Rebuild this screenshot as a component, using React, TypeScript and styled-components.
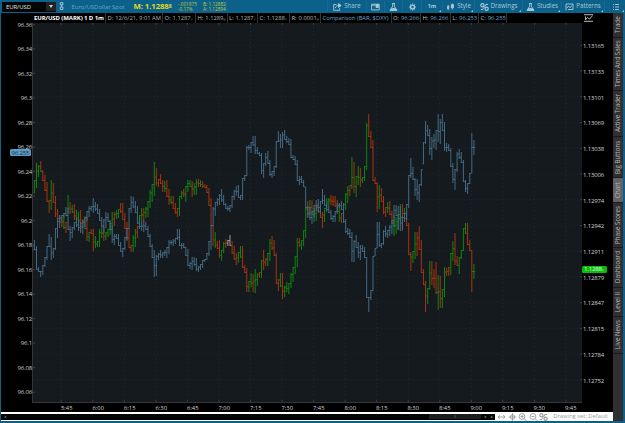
import styled, { createGlobalStyle } from "styled-components";

// One token per minute: high-low followed by the bar colour (g up, r down, w flat).
const EURUSD = `180-193g 163-188g 165-177g 161-172r 170-181r 175-191r 182-202r 200-213r 180-210g 183-203r
196-217r 209-219r 215-223r 217-227r 215-229g 222-233r 195-213g 202-214r 205-213g 204-220r
210-222g 212-226g 210-232r 219-228r 216-229g 217-241r 232-242g 229-234r 229-251r 236-248g
241-247g 229-247g 227-238g 226-241r 232-240g 229-237g 223-235g 212-233g 212-226r 210-219g
209-218g 203-213r 203-220r 213-229r 222-240r 228-248r 245-252r 235-252g 229-247g 226-238r
215-229g 208-222g 208-222r 207-218g 201-217g 190-208g 184-202g 162-196g 168-186r 179-187r
174-184r 180-192r 181-192g 180-197r 189-205r 196-204g 196-209r 203-214r 208-217r 196-216g
191-199g 189-197r 186-202g 180-192g 180-187g 181-197r 183-195g 179-195g 179-187r 180-187g
181-188r 184-188r 185-193r 188-206r 198-226r 226-246r 232-248g 241-249r 240-258r 250-261g
242-253g 239-248r 240-246w 235-246w 241-254r 246-260r 253-265r 252-263g 246-258g 246-268r
265-273r 268-292r 281-292g 273-287g 274-292r 269-293g 273-286g 272-278r 260-278g 250-270r
258-266r 253-266g 239-261g 236-250r 240-256r 253-284r 279-291r 273-287g 273-299r 286-297g
282-292g 283-294g 273-288g 267-282g 256-274g 238-267g 238-247r 240-250g 230-246g 207-238g
201-217r 200-215g 200-215r 208-222g 206-221g 203-212r 206-218r 212-228r 208-222g 198-208g
198-206g 195-205r 196-206r 196-207r 200-212r 203-222g 213-223r 204-223g 193-210g 186-203g
185-196r 157-189g 162-193r 176-197g 166-185g 168-187r 177-183g 166-181g 123-170g 114-137r
131-148r 140-181r 177-184r 182-212r 185-209g 188-202r 196-214r 207-217r 202-213g 201-215r
211-224r 215-236g 217-234g 214-230g 204-222g 204-231r 208-219g 212-226r 223-255r 252-271r
251-263g 232-259g 232-256r 226-250r 240-273r 269-285r 281-312r 288-304g 261-290g 261-285r
269-288r 262-294r 275-310g 276-308r 289-308g 267-297g 268-276r 267-276r 253-275g 241-261g
233-265r 256-266r 257-274g 250-259g 228-251g 223-234g 223-245r 240-251r 250-292r 264-279g`;

const DXY = `240-250 246-270 267-272 271-277 265-275 257-267 246-260 234-247 237-260 248-258
228-250 218-238 215-228 215-221 213-218 207-216 208-230 226-241 227-238 222-230
217-227 219-231 222-233 220-234 217-227 211-221 206-217 206-211 198-213 202-211
204-214 209-221 217-227 219-233 212-228 213-222 220-230 225-243 234-245 234-239
234-246 242-252 248-257 237-250 228-241 208-229 196-213 197-208 201-213 206-224
217-229 222-231 220-232 222-230 226-237 234-247 244-258 250-277 255-276 253-260
250-258 252-258 250-256 247-258 240-254 240-245 239-246 238-244 229-240 229-246
243-249 243-248 247-256 249-266 262-269 257-270 257-266 258-271 266-272 264-270
260-268 259-262 253-260 241-256 225-250 207-226 202-216 198-206 194-205 189-202
195-205 203-209 206-211 205-212 196-208 190-200 186-196 185-198 195-200 178-200
175-181 146-176 145-150 142-153 136-146 136-154 147-154 152-156 153-174 163-178
153-166 151-164 160-176 171-178 166-176 141-168 131-142 134-148 132-148 130-140
136-143 138-145 139-158 155-160 156-165 160-181 176-185 176-183 180-187 187-208
206-218 207-220 211-224 205-218 200-211 199-213 201-214 189-204 195-206 203-212
206-213 210-220 215-222 211-222 203-214 203-208 201-210 203-222 219-233 228-235
229-238 232-262 240-262 235-248 242-258 245-260 245-252 247-258 257-298 297-312
290-300 256-291 248-256 222-248 222-247 243-248 230-245 226-237 230-238 225-236
220-234 205-227 205-216 206-230 206-231 216-230 213-222 204-220 175-208 158-178
167-180 178-196 179-200 184-202 169-186 142-164 121-144 125-136 129-155 137-160
134-148 130-150 114-142 119-144 114-131 122-151 143-152 144-151 148-167 163-183
169-190 152-172 149-159 152-163 160-182 180-192 183-194 173-184 133-173 140-155`;

const COLORS: Record<string, string> = {
  g: "#0f860f",
  r: "#a8330f",
  w: "#9a9a9a",
  b: "#446a85",
};

const FIRST_BAR = 34.4;
const BAR_STEP = 2.103;

const parseBars = (data: string) =>
  data.split(/\s+/).map((token) => {
    const [, high, low, color] = token.match(/(\d+)-(\d+)(\w?)/)!;
    return { high: +high, low: +low, color: color || "b" };
  });

const clamp = (v: number, a: number, b: number) => Math.max(a, Math.min(b, v));

const Series = ({ data }: { data: string }) => {
  const bars = parseBars(data);
  const closes = bars.map((bar, i) => {
    const next = bars[i + 1] || bar;
    return clamp((next.high + next.low) / 2, bar.high + 0.5, bar.low - 0.5);
  });
  return (
    <>
      {bars.map((bar, i) => {
        const x = FIRST_BAR + i * BAR_STEP;
        const open = clamp(closes[i - 1] ?? bar.low, bar.high, bar.low);
        return (
          <path
            key={i}
            d={`M${x} ${bar.high}V${bar.low}M${x - 1} ${open}H${x}M${x} ${closes[i]}H${x + 1.2}`}
            stroke={COLORS[bar.color]}
          />
        );
      })}
    </>
  );
};

const times = ["5:45", "6:00", "6:15", "6:30", "6:45", "7:00", "7:15", "7:30", "7:45", "8:00", "8:15", "8:30", "8:45", "9:00", "9:15", "9:30", "9:45"];
const dollarIndex = ["96.36", "96.34", "96.32", "96.3", "96.28", "96.26", "96.24", "96.22", "96.2", "96.18", "96.16", "96.14", "96.12", "96.1", "96.08", "96.06"];
const prices = ["1.13165", "1.13133", "1.13101", "1.13069", "1.13038", "1.13006", "1.12974", "1.12942", "1.12911", "1.12879", "1.12847", "1.12815", "1.12784", "1.12752"];

const PriceChart = () => (
  <ChartSvg viewBox="33 23 549 379" fill="none">
    <g stroke="#262d32" strokeWidth="0.8" strokeDasharray="1 3">
      {times.map((t, i) => (
        <path key={t} d={`M${61.2 + i * 31.55} 23V402`} />
      ))}
      {prices.map((p, i) => (
        <path key={p} d={`M33 ${45.3 + i * 25.73}H582`} />
      ))}
    </g>
    <g stroke="#4d5256" strokeWidth="0.7">
      {times.map((t, i) => (
        <path key={t} d={`M${61.2 + i * 31.55} 23v2M${61.2 + i * 31.55} 400v2`} />
      ))}
      {dollarIndex.map((p, i) => (
        <path key={p} d={`M33 ${24.4 + i * 24.52}h2`} />
      ))}
      {prices.map((p, i) => (
        <path key={p} d={`M580 ${45.3 + i * 25.73}h2`} />
      ))}
    </g>
    <g strokeWidth="1">
      <Series data={EURUSD} />
      <Series data={DXY} />
    </g>
  </ChartSvg>
);

const ShareIcon = () => (
  <Icon viewBox="0 0 9 8">
    <path d="M3.5 1.5H.7v5.8h6V5.2M2.4 5c.3-1.9 1.7-2.5 4-2.5" />
    <path d="M5.5.6 8.2 2.5 5.5 4.4z" fill="currentColor" />
  </Icon>
);

const NoteIcon = () => (
  <Icon viewBox="0 0 9 8">
    <path d="M.6 1.2h7.6v5.7H.6zM.6 2.2h4" />
    <path d="M5 1.5h2.4v3H5z" fill="currentColor" />
  </Icon>
);

const FlaskIcon = () => (
  <Icon viewBox="0 0 9 8">
    <path d="M3 .5h3M3.7.5v2.7L1 7.4h7L5.3 3.2V.5" />
    <path d="M2.6 5.4h3.8l1.3 1.9H1.4z" fill="currentColor" />
  </Icon>
);

const GearIcon = () => (
  <Icon viewBox="0 0 9 8">
    <circle cx="4.5" cy="4" r="1.9" strokeWidth="1.4" />
    <path d="M4.5.6v1M4.5 6.4v1M1.1 4h1M6.9 4h1M2.1 1.6l.8.8M6.1 5.6l.8.8M6.9 1.6l-.8.8M2.9 5.6l-.8.8" strokeWidth="1.2" />
  </Icon>
);

const StyleIcon = () => (
  <Icon viewBox="0 0 9 8">
    <path d="M2.2 1.8v5.4M6.4.4v6" />
    <path d="M1.6 3.3h1.2v2.4H1.6zM5.3 1.7h2.2v3H5.3z" fill="currentColor" />
  </Icon>
);

const DrawingsIcon = () => (
  <Icon viewBox="0 0 9 8">
    <circle cx="2.4" cy="2.3" r="1.6" strokeWidth="1.2" />
    <circle cx="6.6" cy="5.7" r="1.6" strokeWidth="1.2" />
    <path d="M6.8.8 2 7.2M5.5 1.5h2.6M.8 6.5h2" />
  </Icon>
);

const PatternsIcon = () => (
  <Icon viewBox="0 0 9 8">
    <path d="M1 7.5V1h7v5.5H3M2 5l1.5-2L5 4.8 7 2.4" />
  </Icon>
);

const ListIcon = () => (
  <Icon viewBox="0 0 9 8">
    <path d="M2 1.5h1M4 1.5h4M2 4h1M4 4h4M2 6.5h1M4 6.5h4" />
  </Icon>
);

const quoteCells: [string, string, number, boolean?][] = [
  ["D:", "12/6/21, 9:01 AM", 57],
  ["O:", "1.1287₇", 33],
  ["H:", "1.1289₀", 31.5],
  ["L:", "1.1287₇", 30.5],
  ["C:", "1.1288₇", 32],
  ["R:", "0.0001₀", 31],
  ["", "Comparison (BAR, $DXY)", 70.5, true],
  ["O:", "96.266", 29.5, true],
  ["H:", "96.266", 30, true],
  ["L:", "96.253", 28, true],
  ["C:", "96.255", 29, true],
];

const sideTabs: [string, number][] = [
  ["Trade", 25],
  ["Times And Sales", 53],
  ["Active Trader", 46],
  ["Big Buttons", 41],
  ["Chart", 25],
  ["Phase Scores", 45],
  ["Dashboard", 40],
  ["Level II", 29],
  ["Live News", 37],
];

const App = () => {
  return (
    <Screen>
      <GlobalStyle />
      <TopBar>
        <SymbolBox>
          <span>EUR/USD</span>
          <SymbolArrow />
        </SymbolBox>
        <LinkBox>
          <svg width="6" height="9" viewBox="0 0 6 9" fill="none" stroke="#9cc4d8">
            <path d="M1.3.7h2.6v2.2H1.3zM1.3 5h2.6v2.5H1.3zM2.6 2.9V5" />
          </svg>
        </LinkBox>
        <SpotName>Euro/USDollar Spot</SpotName>
        <LastPrice>
          M: 1.1288<small>8</small>
        </LastPrice>
        <PricePair $width={26}>
          <span>-.001975</span>
          <span>-0.17%</span>
        </PricePair>
        <PricePair $width={25}>
          <span>B: 1.12882</span>
          <span>A: 1.12894</span>
        </PricePair>
        <Spacer />
        <ToolItem $width={39}><ShareIcon />Share</ToolItem>
        <ToolItem $width={18}><NoteIcon /></ToolItem>
        <ToolItem $width={18}><FlaskIcon /></ToolItem>
        <ToolItem $width={19}><GearIcon /></ToolItem>
        <ToolItem $width={21} $menu><b>1m</b></ToolItem>
        <ToolItem $width={32} $menu><StyleIcon />Style</ToolItem>
        <ToolItem $width={48} $menu><DrawingsIcon />Drawings</ToolItem>
        <ToolItem $width={39} $menu><FlaskIcon />Studies</ToolItem>
        <ToolItem $width={43} $menu><PatternsIcon />Patterns</ToolItem>
        <ToolItem $width={21} $menu><ListIcon /></ToolItem>
      </TopBar>
      <Main>
        <Workspace>
          <QuoteBar>
            <QuoteTitle>EUR/USD (MARK) 1 D 1m</QuoteTitle>
            {quoteCells.map(([label, value, width, blue], i) => (
              <QuoteCell key={i} $width={width}>
                {label && <span>{label}</span>}
                <QuoteValue $blue={blue}>{value}</QuoteValue>
              </QuoteCell>
            ))}
            <CornerIcon viewBox="0 0 10 8" fill="none" stroke="#b8b8b8">
              <path d="M0 .7h9M0 7.3h9M1.5 2.5v3.4l2-2.4 2 1.6L8.5 1.6" />
            </CornerIcon>
          </QuoteBar>
          <ChartRow>
            <LeftAxis>
              {dollarIndex.map((v) => <LeftLabel key={v}>{v}</LeftLabel>)}
              <LeftBadge>96.255</LeftBadge>
            </LeftAxis>
            <PriceChart />
            <RightAxis>
              {prices.map((v) => <RightLabel key={v}>{v}</RightLabel>)}
              <RightBadge>1.1288<small>₇</small></RightBadge>
            </RightAxis>
          </ChartRow>
          <TimeAxis>
            {times.map((t) => <TimeLabel key={t}>{t}</TimeLabel>)}
          </TimeAxis>
          <BottomBar>
            <ScrollTrack>
              <ScrollArrow>◂</ScrollArrow>
              <ScrollThumb>≡</ScrollThumb>
              <ScrollArrow>◂</ScrollArrow>
              <ScrollArrow>▸</ScrollArrow>
            </ScrollTrack>
            <BottomTools>
              <Icon viewBox="0 0 9 8">
                <path d="M1 4h7M2.7 2.2 1 4l1.7 1.8M6.3 2.2 8 4 6.3 5.8" />
              </Icon>
              <Icon viewBox="0 0 9 8">
                <circle cx="4.5" cy="4" r="2.3" />
                <path d="M4.5.3v7.4M.8 4h7.4" />
              </Icon>
              <Icon viewBox="0 0 9 8">
                <circle cx="4" cy="3.5" r="2.9" />
                <path d="M6.1 5.6 8.5 8M2.5 3.5h3M4 2v3" />
              </Icon>
              <Icon viewBox="0 0 9 8">
                <circle cx="4" cy="3.5" r="2.9" />
                <path d="M6.1 5.6 8.5 8M2.5 3.5h3" />
              </Icon>
              <DrawingsIcon />
            </BottomTools>
            <DrawingSet>Drawing set: Default</DrawingSet>
          </BottomBar>
        </Workspace>
        <SideTabs>
          {sideTabs.map(([name, height]) => (
            <SideTab key={name} $height={height} $active={name === "Chart"}>{name}</SideTab>
          ))}
        </SideTabs>
      </Main>
    </Screen>
  );
};

const GlobalStyle = createGlobalStyle`
  body {
    margin: 0;
    overflow: hidden;
    background: #000;
  }
  * {
    box-sizing: border-box;
  }
`;

const Screen = styled.div`
  width: 625px;
  height: 423px;
  display: flex;
  flex-direction: column;
  background: #0b618a;
  font-family: "Open Sans", "Noto Sans", sans-serif;
  font-size: 6px;
  line-height: 1;
  white-space: nowrap;
`;

const TopBar = styled.div`
  height: 13px;
  flex-shrink: 0;
  display: flex;
  align-items: center;
  padding-left: 2px;
  background: #0b618a;
`;

const SymbolBox = styled.div`
  width: 54px;
  height: 10px;
  display: flex;
  align-items: center;
  justify-content: space-between;
  padding-left: 4px;
  background: #050505;
  color: #e0e0e0;
  font-size: 6px;
  letter-spacing: -0.1px;
`;

const SymbolArrow = styled.div`
  width: 10px;
  height: 9px;
  display: flex;
  align-items: center;
  justify-content: center;
  background: #222;

  &::before {
    content: "";
    border: 2px solid transparent;
    border-top: 3px solid #d0d0d0;
    border-bottom: 0;
  }
`;

const LinkBox = styled.div`
  width: 12px;
  height: 10px;
  padding-left: 3px;
`;

const SpotName = styled.div`
  width: 58px;
  padding: 1px 0 0 3.5px;
  color: #5fa9cb;
  font-size: 6px;
  letter-spacing: -0.05px;
`;

const LastPrice = styled.div`
  width: 46px;
  padding: 1px 0 0 7.5px;
  color: #e0d81c;
  font-size: 7.8px;
  font-weight: 700;
  letter-spacing: -0.1px;

  small {
    font-size: 5px;
    vertical-align: 1.5px;
  }
`;

const PricePair = styled.div<{ $width: number }>`
  width: ${({ $width }) => $width}px;
  display: flex;
  flex-direction: column;
  padding: 1px 0 0 6px;
  color: #c2cc30;
  font-size: 4.7px;
  line-height: 5px;

  & + & {
    padding-left: 5px;
  }
`;

const Spacer = styled.div`
  flex: 1;
  height: 11px;
  margin-left: 3px;
  border-left: 1px solid #146b94;
`;

const ToolItem = styled.div<{ $width: number; $menu?: boolean }>`
  position: relative;
  width: ${({ $width }) => $width}px;
  height: 11px;
  flex-shrink: 0;
  display: flex;
  align-items: center;
  justify-content: center;
  gap: 2px;
  border-left: 1px solid #146b94;
  color: #a9c9d9;
  font-size: 6.2px;

  b {
    font-size: 5.5px;
  }

  &::after {
    content: "";
    display: ${({ $menu }) => ($menu ? "block" : "none")};
    position: absolute;
    right: 1px;
    bottom: 0;
    border-left: 2px solid transparent;
    border-bottom: 2px solid #a9c9d9;
  }
`;

const Icon = styled.svg`
  width: 9px;
  height: 8px;
  flex-shrink: 0;
  fill: none;
  stroke: currentColor;
  stroke-width: 0.9;
`;

const Main = styled.div`
  height: 410px;
  display: flex;
  padding: 0 2px 2px 1px;
`;

const Workspace = styled.div`
  width: 612px;
  display: flex;
  flex-direction: column;
  background: #000;
`;

const QuoteBar = styled.div`
  height: 10px;
  display: flex;
  padding-left: 32px;
  color: #c0c0c0;
  font-size: 5.8px;
  line-height: 10px;
`;

const QuoteTitle = styled.div`
  width: 72px;
  padding-left: 1px;
  color: #fff;
  font-size: 6px;
  font-weight: 700;
  letter-spacing: -0.1px;
`;

const QuoteCell = styled.div<{ $width: number }>`
  width: ${({ $width }) => $width}px;
  flex-shrink: 0;
  display: flex;
  gap: 2px;
  padding-left: 1.5px;
  border-left: 1px solid #333;

  &:last-of-type {
    border-right: 1px solid #333;
  }
`;

const QuoteValue = styled.span<{ $blue?: boolean }>`
  color: ${({ $blue }) => ($blue ? "#6aa6cc" : "#b4b4b4")};
`;

const CornerIcon = styled.svg`
  width: 10px;
  height: 8px;
  margin: 1px 19px 0 auto;
`;

const ChartRow = styled.div`
  height: 380px;
  display: flex;
`;

const LeftAxis = styled.div`
  position: relative;
  width: 31px;
  height: 380px;
  color: #c8c8c8;
  font-size: 6.1px;
  letter-spacing: -0.2px;
`;

const LeftLabel = styled.div`
  height: 24.52px;
  display: flex;
  align-items: center;
  justify-content: flex-end;

  &:first-child {
    margin-top: -10.5px;
  }
`;

const LeftBadge = styled.div`
  position: absolute;
  top: 126px;
  left: 9px;
  width: 21px;
  height: 7px;
  border-radius: 1.5px;
  background: #5a9cc4;
  color: #12324a;
  text-align: center;
  line-height: 7px;
`;

const ChartSvg = styled.svg`
  width: 550px;
  height: 380px;
  flex-shrink: 0;
  background: #151a1e;
  border-left: 1px solid #353535;
  border-bottom: 1px solid #353535;
`;

const RightAxis = styled.div`
  position: relative;
  width: 31px;
  padding-top: 10.4px;
  color: #d2d2d2;
  font-size: 6px;
  letter-spacing: -0.15px;
`;

const RightLabel = styled.div`
  height: 25.73px;
  display: flex;
  align-items: center;
  padding-left: 1px;
`;

const RightBadge = styled.div`
  position: absolute;
  top: 243px;
  left: 0;
  width: 25px;
  height: 7px;
  padding-left: 2px;
  border-radius: 1.5px;
  background: #08bd08;
  color: #eaffea;
  font-size: 6px;
  line-height: 7px;

  small {
    font-size: 5px;
  }
`;

const TimeAxis = styled.div`
  height: 9px;
  display: flex;
  padding-left: 60px;
  color: #d2d2d2;
  font-size: 5.8px;
  line-height: 11px;
`;

const TimeLabel = styled.div`
  width: 31.5px;
  flex-shrink: 0;
`;

const BottomBar = styled.div`
  height: 9px;
  display: flex;
  align-items: center;
  background: #fff;
`;

const ScrollTrack = styled.div`
  width: 494px;
  height: 6px;
  display: flex;
  align-items: center;
  background: #050505;
  color: #888;
`;

const ScrollArrow = styled.div`
  width: 7px;
  text-align: center;
  font-size: 4px;
`;

const ScrollThumb = styled.div`
  width: 52px;
  height: 5px;
  margin-left: auto;
  background: #1d1d1d;
  text-align: center;
  font-size: 4px;
  line-height: 5px;
`;

const BottomTools = styled.div`
  display: flex;
  gap: 1.5px;
  padding-left: 2px;
  color: #9a9a9a;
`;

const DrawingSet = styled.div`
  margin-left: auto;
  padding-right: 5px;
  color: #9c9c9c;
  font-size: 5.8px;
`;

const SideTabs = styled.div`
  width: 10px;
  display: flex;
  flex-direction: column;
  background: #303030;
`;

const SideTab = styled.div<{ $height: number; $active?: boolean }>`
  width: 10px;
  height: ${({ $height }) => $height}px;
  display: flex;
  align-items: center;
  justify-content: center;
  border-top: 1px solid #1a1a1a;
  background: ${({ $active }) => ($active ? "#626262" : "#303030")};
  color: #b4b4b4;
  font-size: 6.2px;
  line-height: 10px;
  writing-mode: vertical-rl;
  transform: rotate(180deg);
`;

export default App;
